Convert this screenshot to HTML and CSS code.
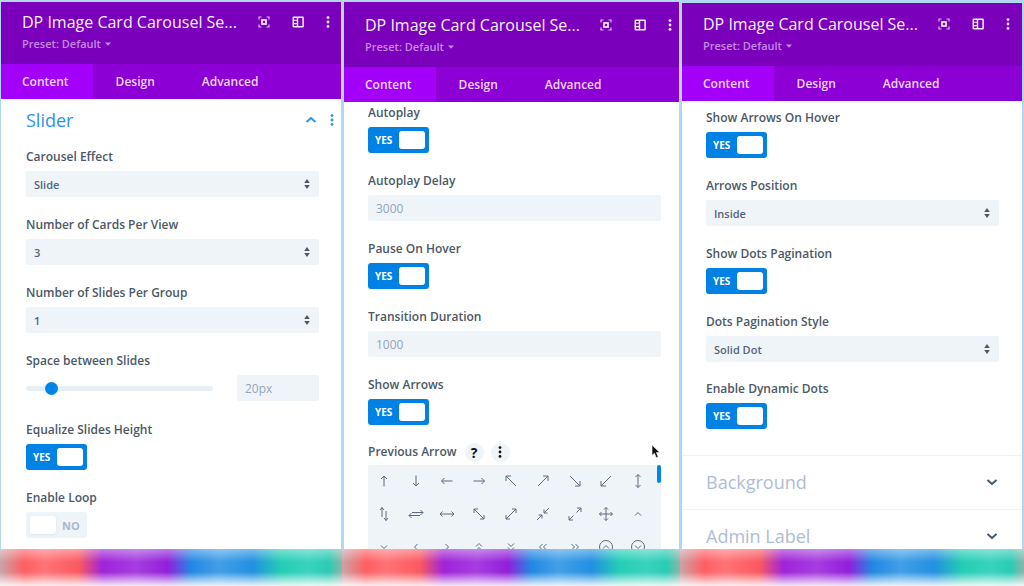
FILE: index.html
```html
<!DOCTYPE html>
<html lang="en">
<head>
<meta charset="utf-8">
<title>DP Image Card Carousel Settings</title>
<link rel="stylesheet" href="styles.css">
</head>
<body>
<svg class="sprite" aria-hidden="true">
  <symbol id="focus" viewBox="0 0 12 12"><path d="M1 3.500V1h2.500M8.500 1H11v2.500M11 8.500V11H8.500M3.500 11H1V8.500" fill="none" stroke="currentColor" stroke-width="1.200" opacity=".8"/><rect x="4" y="4" width="4" height="4" fill="none" stroke="currentColor" stroke-width="1.700"/></symbol>
  <symbol id="layout" viewBox="0 0 12 12"><rect x="1.300" y="1.300" width="9.800" height="9.400" rx=".5" fill="none" stroke="currentColor" stroke-width="1.500"/><path d="M5.500 1v10" stroke="currentColor" stroke-width="1.400"/><path d="M2 4.300h3M2 7.600h3" stroke="currentColor" stroke-width="1.100"/></symbol>
  <symbol id="dots" viewBox="0 0 4 12"><g fill="currentColor"><circle cx="2" cy="1.600" r="1.400"/><circle cx="2" cy="6" r="1.400"/><circle cx="2" cy="10.400" r="1.400"/></g></symbol>
  <symbol id="caret" viewBox="0 0 6 4"><path d="M0 .5h6L3 3.700z" fill="currentColor"/></symbol>
  <symbol id="sort" viewBox="0 0 6 12"><path d="M3 1l2.800 4H.2zM3 11L.2 7h5.600z" fill="currentColor"/></symbol>
  <symbol id="chev-up" viewBox="0 0 12 8"><path d="M1.500 6L6 2l4.500 4" fill="none" stroke="currentColor" stroke-width="1.900"/></symbol>
  <symbol id="chev-down" viewBox="0 0 12 8"><path d="M1.500 2L6 6l4.500-4" fill="none" stroke="currentColor" stroke-width="1.900"/></symbol>
  <symbol id="up" viewBox="0 0 16 16"><path d="M8 13.500V3M5 6l3-3 3 3"/></symbol>
  <symbol id="down" viewBox="0 0 16 16"><path d="M8 2.500V13M5 10l3 3 3-3"/></symbol>
  <symbol id="left" viewBox="0 0 16 16"><path d="M13.500 8H2.500M5.500 5l-3 3 3 3"/></symbol>
  <symbol id="right" viewBox="0 0 16 16"><path d="M2.500 8h11M10.500 5l3 3-3 3"/></symbol>
  <symbol id="nw" viewBox="0 0 16 16"><path d="M13 13L3 3M3 8V3h5"/></symbol>
  <symbol id="ne" viewBox="0 0 16 16"><path d="M3 13L13 3M8 3h5v5"/></symbol>
  <symbol id="se" viewBox="0 0 16 16"><path d="M3 3l10 10M13 8v5H8"/></symbol>
  <symbol id="sw" viewBox="0 0 16 16"><path d="M13 3L3 13M3 8v5h5"/></symbol>
  <symbol id="ud" viewBox="0 0 16 16"><path d="M8 1.500v13M5.500 4L8 1.500 10.500 4M5.500 12L8 14.500l2.500-2.500"/></symbol>
  <symbol id="ud2" viewBox="0 0 16 16"><path d="M6 11V1.500M4 4l2-2.500L8 4M10 5v9.500M8 12l2 2.500 2-2.500"/></symbol>
  <symbol id="lr2" viewBox="0 0 16 16"><path d="M4 6.500h11M12.500 4l2.500 2.500L12.500 9M12 9.500H1M3.500 7L1 9.500 3.500 12"/></symbol>
  <symbol id="lr" viewBox="0 0 16 16"><path d="M1 8h14M3.500 5.500L1 8l2.500 2.500M12.500 5.500L15 8l-2.500 2.500"/></symbol>
  <symbol id="nwse" viewBox="0 0 16 16"><path d="M3 3l10 10M3 7V3h4M13 9v4H9"/></symbol>
  <symbol id="nesw" viewBox="0 0 16 16"><path d="M3 13L13 3M9 3h4v4M3 9v4h4"/></symbol>
  <symbol id="in" viewBox="0 0 16 16"><path d="M2 14l5-5M3.500 9H7v3.500M14 2L9 7M9 3.500V7h3.500"/></symbol>
  <symbol id="out" viewBox="0 0 16 16"><path d="M2 14l4.500-4.500M2 10v4h4M14 2L9.500 6.500M10 2h4v4"/></symbol>
  <symbol id="move" viewBox="0 0 16 16"><path d="M8 1.500v13M1.500 8h13M6 3.500l2-2 2 2M6 12.500l2 2 2-2M3.500 6l-2 2 2 2M12.500 6l2 2-2 2"/></symbol>
  <symbol id="cu" viewBox="0 0 16 16"><path d="M5 9.500l3-3 3 3"/></symbol>
  <symbol id="cd" viewBox="0 0 16 16"><path d="M5 6.500l3 3 3-3"/></symbol>
  <symbol id="cl" viewBox="0 0 16 16"><path d="M9.500 5l-3 3 3 3"/></symbol>
  <symbol id="cr" viewBox="0 0 16 16"><path d="M6.500 5l3 3-3 3"/></symbol>
  <symbol id="ccu" viewBox="0 0 16 16"><path d="M5 7.500l3-3 3 3M5 11.500l3-3 3 3"/></symbol>
  <symbol id="ccd" viewBox="0 0 16 16"><path d="M5 4.500l3 3 3-3M5 8.500l3 3 3-3"/></symbol>
  <symbol id="ccl" viewBox="0 0 16 16"><path d="M7.500 5l-3 3 3 3M11.500 5l-3 3 3 3"/></symbol>
  <symbol id="ccr" viewBox="0 0 16 16"><path d="M4.500 5l3 3-3 3M8.500 5l3 3-3 3"/></symbol>
  <symbol id="ocu" viewBox="0 0 16 16"><circle cx="8" cy="8" r="6.500"/><path d="M5 9.500l3-3 3 3"/></symbol>
  <symbol id="ocd" viewBox="0 0 16 16"><circle cx="8" cy="8" r="6.500"/><path d="M5 6.500l3 3 3-3"/></symbol>
</svg>

<main class="panels">
  <section class="panel panel-first">
    <header class="panel-header">
      <div class="title-row">
        <h2 class="title">DP Image Card Carousel Se...</h2>
        <div class="tools">
          <button class="icon-btn" aria-label="Expand"><svg width="12" height="12"><use href="#focus"/></svg></button>
          <button class="icon-btn" aria-label="Layout"><svg width="12" height="12"><use href="#layout"/></svg></button>
          <button class="icon-btn" aria-label="More"><svg width="4" height="12"><use href="#dots"/></svg></button>
        </div>
      </div>
      <button class="preset">Preset: Default <svg width="6" height="4"><use href="#caret"/></svg></button>
    </header>
    <nav class="tabs">
      <button class="tab active">Content</button><button class="tab">Design</button><button class="tab">Advanced</button>
    </nav>
    <div class="body">
      <div class="section-head">
        <h3 class="section-title">Slider</h3>
        <button class="icon-btn" aria-label="Collapse"><svg width="12" height="8"><use href="#chev-up"/></svg></button>
        <button class="icon-btn" aria-label="Section options"><svg width="4" height="12"><use href="#dots"/></svg></button>
      </div>
      <div class="fields">
        <div class="field">
          <label class="label" for="effect">Carousel Effect</label>
          <div class="select-wrap"><select class="control" id="effect"><option>Slide</option></select><svg class="sort" width="6" height="12"><use href="#sort"/></svg></div>
        </div>
        <div class="field">
          <label class="label" for="cards">Number of Cards Per View</label>
          <div class="select-wrap"><select class="control" id="cards"><option>3</option></select><svg class="sort" width="6" height="12"><use href="#sort"/></svg></div>
        </div>
        <div class="field">
          <label class="label" for="group">Number of Slides Per Group</label>
          <div class="select-wrap"><select class="control" id="group"><option>1</option></select><svg class="sort" width="6" height="12"><use href="#sort"/></svg></div>
        </div>
        <div class="field range-field">
          <label class="label" for="space">Space between Slides</label>
          <div class="range-row">
            <input class="range" id="space" type="range" min="0" max="180" value="20">
            <input class="control range-value" type="text" value="20px" aria-label="Space between Slides value">
          </div>
        </div>
        <div class="field">
          <label class="label" for="equalize">Equalize Slides Height</label>
          <label class="toggle on">YES<input class="knob" id="equalize" type="checkbox" checked></label>
        </div>
        <div class="field">
          <label class="label" for="loop">Enable Loop</label>
          <label class="toggle off"><input class="knob" id="loop" type="checkbox">NO</label>
        </div>
      </div>
    </div>
  </section>

  <section class="panel panel-second">
    <header class="panel-header">
      <div class="title-row">
        <h2 class="title">DP Image Card Carousel Se...</h2>
        <div class="tools">
          <button class="icon-btn" aria-label="Expand"><svg width="12" height="12"><use href="#focus"/></svg></button>
          <button class="icon-btn" aria-label="Layout"><svg width="12" height="12"><use href="#layout"/></svg></button>
          <button class="icon-btn" aria-label="More"><svg width="4" height="12"><use href="#dots"/></svg></button>
        </div>
      </div>
      <button class="preset">Preset: Default <svg width="6" height="4"><use href="#caret"/></svg></button>
    </header>
    <nav class="tabs">
      <button class="tab active">Content</button><button class="tab">Design</button><button class="tab">Advanced</button>
    </nav>
    <div class="body">
      <div class="fields">
        <div class="field">
          <label class="label" for="autoplay">Autoplay</label>
          <label class="toggle on">YES<input class="knob" id="autoplay" type="checkbox" checked></label>
        </div>
        <div class="field">
          <label class="label" for="delay">Autoplay Delay</label>
          <input class="control" id="delay" type="text" placeholder="3000">
        </div>
        <div class="field">
          <label class="label" for="pause">Pause On Hover</label>
          <label class="toggle on">YES<input class="knob" id="pause" type="checkbox" checked></label>
        </div>
        <div class="field">
          <label class="label" for="duration">Transition Duration</label>
          <input class="control" id="duration" type="text" placeholder="1000">
        </div>
        <div class="field compact">
          <label class="label" for="arrows">Show Arrows</label>
          <label class="toggle on">YES<input class="knob" id="arrows" type="checkbox" checked></label>
        </div>
        <div class="field picker-field">
          <div class="label-row">
            <span class="label">Previous Arrow</span>
            <button class="round" aria-label="Help">?</button>
            <button class="round" aria-label="Field options"><svg width="4" height="12"><use href="#dots"/></svg></button>
            <svg class="pointer" width="10" height="15" viewBox="0 0 10 15"><path d="M1 1v10.500l2.400-2.200 1.900 4.400 2-.8-1.900-4.300h3.400z" fill="#111" stroke="#fff" stroke-width=".6"/></svg>
          </div>
          <div class="picker">
            <div class="glyphs">
              <button class="glyph" aria-label="Up"><svg><use href="#up"/></svg></button>
              <button class="glyph" aria-label="Down"><svg><use href="#down"/></svg></button>
              <button class="glyph" aria-label="Left"><svg><use href="#left"/></svg></button>
              <button class="glyph" aria-label="Right"><svg><use href="#right"/></svg></button>
              <button class="glyph" aria-label="Up left"><svg><use href="#nw"/></svg></button>
              <button class="glyph" aria-label="Up right"><svg><use href="#ne"/></svg></button>
              <button class="glyph" aria-label="Down right"><svg><use href="#se"/></svg></button>
              <button class="glyph" aria-label="Down left"><svg><use href="#sw"/></svg></button>
              <button class="glyph" aria-label="Vertical"><svg><use href="#ud"/></svg></button>
              <button class="glyph" aria-label="Vertical pair"><svg><use href="#ud2"/></svg></button>
              <button class="glyph" aria-label="Horizontal pair"><svg><use href="#lr2"/></svg></button>
              <button class="glyph" aria-label="Horizontal"><svg><use href="#lr"/></svg></button>
              <button class="glyph" aria-label="Diagonal down"><svg><use href="#nwse"/></svg></button>
              <button class="glyph" aria-label="Diagonal up"><svg><use href="#nesw"/></svg></button>
              <button class="glyph" aria-label="Contract"><svg><use href="#in"/></svg></button>
              <button class="glyph" aria-label="Expand"><svg><use href="#out"/></svg></button>
              <button class="glyph" aria-label="Move"><svg><use href="#move"/></svg></button>
              <button class="glyph" aria-label="Caret up"><svg><use href="#cu"/></svg></button>
              <button class="glyph" aria-label="Caret down"><svg><use href="#cd"/></svg></button>
              <button class="glyph" aria-label="Caret left"><svg><use href="#cl"/></svg></button>
              <button class="glyph" aria-label="Caret right"><svg><use href="#cr"/></svg></button>
              <button class="glyph" aria-label="Double caret up"><svg><use href="#ccu"/></svg></button>
              <button class="glyph" aria-label="Double caret down"><svg><use href="#ccd"/></svg></button>
              <button class="glyph" aria-label="Double caret left"><svg><use href="#ccl"/></svg></button>
              <button class="glyph" aria-label="Double caret right"><svg><use href="#ccr"/></svg></button>
              <button class="glyph" aria-label="Circle caret up"><svg><use href="#ocu"/></svg></button>
              <button class="glyph" aria-label="Circle caret down"><svg><use href="#ocd"/></svg></button>
            </div>
            <span class="scroll-thumb"></span>
          </div>
        </div>
      </div>
    </div>
  </section>

  <section class="panel panel-third">
    <header class="panel-header">
      <div class="title-row">
        <h2 class="title">DP Image Card Carousel Se...</h2>
        <div class="tools">
          <button class="icon-btn" aria-label="Expand"><svg width="12" height="12"><use href="#focus"/></svg></button>
          <button class="icon-btn" aria-label="Layout"><svg width="12" height="12"><use href="#layout"/></svg></button>
          <button class="icon-btn" aria-label="More"><svg width="4" height="12"><use href="#dots"/></svg></button>
        </div>
      </div>
      <button class="preset">Preset: Default <svg width="6" height="4"><use href="#caret"/></svg></button>
    </header>
    <nav class="tabs">
      <button class="tab active">Content</button><button class="tab">Design</button><button class="tab">Advanced</button>
    </nav>
    <div class="body">
      <div class="fields">
        <div class="field">
          <label class="label" for="hover">Show Arrows On Hover</label>
          <label class="toggle on">YES<input class="knob" id="hover" type="checkbox" checked></label>
        </div>
        <div class="field">
          <label class="label" for="position">Arrows Position</label>
          <div class="select-wrap"><select class="control" id="position"><option>Inside</option></select><svg class="sort" width="6" height="12"><use href="#sort"/></svg></div>
        </div>
        <div class="field">
          <label class="label" for="pagination">Show Dots Pagination</label>
          <label class="toggle on">YES<input class="knob" id="pagination" type="checkbox" checked></label>
        </div>
        <div class="field compact">
          <label class="label" for="style">Dots Pagination Style</label>
          <div class="select-wrap"><select class="control" id="style"><option>Solid Dot</option></select><svg class="sort" width="6" height="12"><use href="#sort"/></svg></div>
        </div>
        <div class="field">
          <label class="label" for="dynamic">Enable Dynamic Dots</label>
          <label class="toggle on">YES<input class="knob" id="dynamic" type="checkbox" checked></label>
        </div>
      </div>
      <button class="closed-section">Background<svg width="12" height="8"><use href="#chev-down"/></svg></button>
      <button class="closed-section">Admin Label<svg width="12" height="8"><use href="#chev-down"/></svg></button>
    </div>
  </section>
</main>
<footer class="footer">
  <div class="actions"></div>
  <div class="actions"></div>
  <div class="actions"></div>
</footer>
</body>
</html>
```

FILE: styles.css
```css
* {
  box-sizing: border-box;
}

body {
  margin: 0;
  height: 100vh;
  display: flex;
  flex-direction: column;
  overflow: hidden;
  background: #fff;
  color: #4c5866;
  font-family: "Open Sans", "Noto Sans", sans-serif;
}

button,
input,
select {
  margin: 0;
  padding: 0;
  border: 0;
  background: none;
  color: inherit;
  font: inherit;
}

.sprite {
  display: none;
}

.panels,
.footer {
  display: grid;
  grid-template-columns: 342fr 338fr 344fr;
}

.panels {
  flex: 1;
  min-height: 0;
}

.panel {
  min-width: 0;
  overflow: hidden;
  border: solid #b3d6f2;
  border-width: 2px 1px 0 2px;
}

.panel-first {
  border-left-width: 1px;
}

.panel-third {
  border-top-width: 3px;
  border-right-width: 2px;
}

.panel-header {
  padding: 8px 11px 12px 21px;
  background: #7b00bc;
  color: #f8effd;
}

.panel-second .panel-header {
  padding-top: 11px;
  padding-right: 7px;
}

.panel-third .panel-header {
  padding-top: 9px;
  padding-right: 12px;
}

.title-row {
  display: flex;
  align-items: center;
  justify-content: space-between;
}

.title {
  margin: 0;
  font-size: 16px;
  line-height: 24px;
  font-weight: 500;
  white-space: nowrap;
}

.tools {
  display: flex;
  gap: 22px;
}

.icon-btn {
  display: flex;
}

.preset {
  display: flex;
  align-items: center;
  gap: 4px;
  margin-top: 2px;
  font-size: 11px;
  line-height: 16px;
  font-weight: 600;
  color: #c48be2;
}

.tabs {
  display: flex;
  background: #8c00d6;
}

.tab {
  padding: 0 24px 0 23px;
  font-size: 12px;
  line-height: 35px;
  font-weight: 600;
  color: #ecd6fa;
}

.tab.active {
  padding-left: 21px;
  background: #a200f9;
}

.section-head {
  display: flex;
  align-items: center;
  gap: 13px;
  padding: 6px 7px 13px 25px;
  color: #2b93e6;
}

.section-title {
  flex: 1;
  margin: 0;
  font-size: 18px;
  line-height: 30px;
  font-weight: 400;
}

.fields {
  padding: 0 22px 0 25px;
}

.panel-second .fields {
  padding: 2px 18px 0 24px;
}

.panel-third .fields {
  padding: 8px 23px 7px 24px;
}

.field {
  display: flex;
  flex-direction: column;
  align-items: flex-start;
  gap: 5px;
  margin-bottom: 19px;
}

.field.range-field {
  margin-bottom: 20px;
}

.field.compact {
  margin-bottom: 18px;
}

.label {
  font-size: 12px;
  line-height: 18px;
  font-weight: 600;
}

.control {
  display: block;
  width: 100%;
  height: 26px;
  padding: 0 8px;
  border-radius: 2px;
  background: #eff4f9;
  appearance: none;
  font-size: 12px;
  font-weight: 500;
  color: #56647a;
}

select.control {
  font-size: 11px;
  font-weight: 600;
}

.control::placeholder {
  color: #94a4be;
}

.select-wrap {
  position: relative;
  width: 100%;
}

.sort {
  position: absolute;
  top: 7px;
  right: 9px;
  color: #4c5866;
  pointer-events: none;
}

.range-row {
  display: flex;
  align-items: center;
  gap: 24px;
  width: 100%;
}

.range {
  flex: 1;
  min-width: 0;
  height: 14px;
  appearance: none;
}

.range::-webkit-slider-runnable-track {
  height: 5px;
  border-radius: 3px;
  background: #e7eef6;
}

.range::-webkit-slider-thumb {
  width: 13px;
  height: 13px;
  margin-top: -4px;
  appearance: none;
  border-radius: 50%;
  background: #0085e6;
}

.range-value {
  width: 82px;
  color: #94a4be;
}

.toggle {
  display: flex;
  align-items: center;
  width: 61px;
  height: 26px;
  border-radius: 3px;
  font-size: 11px;
  font-weight: 700;
}

.toggle.on {
  justify-content: space-between;
  padding: 0 4px 0 7px;
  background: #0082e5;
  color: #fff;
  font-size: 10px;
}

.toggle.off {
  gap: 6px;
  padding-left: 4px;
  background: #eff4f9;
  color: #a9b7cd;
}

.knob {
  width: 26px;
  height: 18px;
  border-radius: 3px;
  background: #fff;
  appearance: none;
}

.toggle.off .knob {
  box-shadow: 0 1px 3px #dbe3ec;
}

.label-row {
  position: relative;
  display: flex;
  align-items: center;
  width: 100%;
  height: 18px;
}

.label-row .label {
  margin-right: 8px;
}

.round {
  display: flex;
  align-items: center;
  justify-content: center;
  width: 19px;
  height: 19px;
  margin-right: 7px;
  border-radius: 50%;
  background: #eff4f9;
  color: #111;
  font-size: 14px;
  line-height: 19px;
  font-weight: 700;
}

.pointer {
  position: absolute;
  top: 1px;
  right: 0;
}

.field.picker-field {
  gap: 4px;
}

.picker {
  position: relative;
  width: 100%;
  padding-right: 7px;
  border-radius: 2px;
  background: #eff4f9;
}

.glyphs {
  display: grid;
  grid-template-columns: repeat(9, 1fr);
  row-gap: 1px;
}

.glyph {
  display: flex;
  align-items: center;
  justify-content: center;
  height: 32px;
}

.glyph svg {
  width: 16px;
  height: 16px;
  fill: none;
  stroke: #5c6a80;
  stroke-width: 1;
}

.scroll-thumb {
  position: absolute;
  top: 0;
  right: 0;
  width: 4px;
  height: 18px;
  border-radius: 2px;
  background: #0085e6;
}

.closed-section {
  display: flex;
  align-items: center;
  justify-content: space-between;
  width: 100%;
  height: 54px;
  padding: 0 24px 2px;
  border-top: 1px solid #edf4f9;
  font-size: 18px;
  color: #afbdd2;
}

.closed-section svg {
  color: #43546b;
}

.footer {
  height: 37px;
}

.actions {
  background:
    linear-gradient(#ffffff66, #ffffff00 35%, #ffffff00 62%, #ffffffe6),
    linear-gradient(90deg, #c9a5a8, #ff5f63 7%, #ff7377 13%, #fb5a60 23%, #a024d8 30%, #a53de0 40%, #931fdb 49%, #2388e3 56%, #429fe8 64%, #2390e2 74%, #24cdb5 82%, #3ad3bd 90%, #2accb4 96%, #8bb5ab);
}
```
